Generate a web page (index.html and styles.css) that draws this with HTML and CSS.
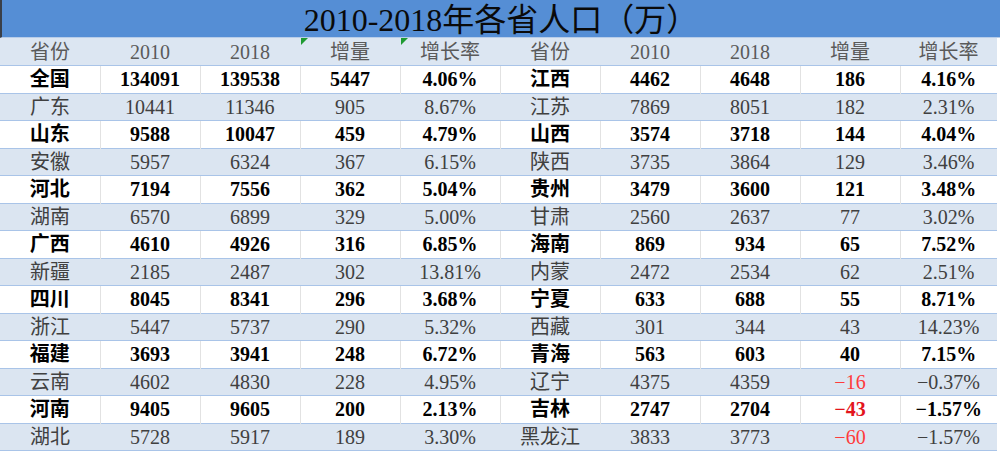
FILE: index.html
```html
<!DOCTYPE html>
<html lang="zh-CN">
<head>
<meta charset="utf-8">
<title>2010-2018年各省人口（万）</title>
<link rel="stylesheet" href="styles.css">
</head>
<body>
<div class="sheet">
  <div class="title">2010-2018年各省人口（万）</div>
  <table class="grid">
    <thead>
      <tr class="head">
        <th>省份</th><th>2010</th><th>2018</th><th class="flag">增量</th><th class="flag">增长率</th>
        <th>省份</th><th>2010</th><th>2018</th><th>增量</th><th>增长率</th>
      </tr>
    </thead>
    <tbody>
      <tr class="w"><td>全国</td><td>134091</td><td>139538</td><td>5447</td><td>4.06%</td><td>江西</td><td>4462</td><td>4648</td><td>186</td><td>4.16%</td></tr>
      <tr class="b"><td>广东</td><td>10441</td><td>11346</td><td>905</td><td>8.67%</td><td>江苏</td><td>7869</td><td>8051</td><td>182</td><td>2.31%</td></tr>
      <tr class="w"><td>山东</td><td>9588</td><td>10047</td><td>459</td><td>4.79%</td><td>山西</td><td>3574</td><td>3718</td><td>144</td><td>4.04%</td></tr>
      <tr class="b"><td>安徽</td><td>5957</td><td>6324</td><td>367</td><td>6.15%</td><td>陕西</td><td>3735</td><td>3864</td><td>129</td><td>3.46%</td></tr>
      <tr class="w"><td>河北</td><td>7194</td><td>7556</td><td>362</td><td>5.04%</td><td>贵州</td><td>3479</td><td>3600</td><td>121</td><td>3.48%</td></tr>
      <tr class="b"><td>湖南</td><td>6570</td><td>6899</td><td>329</td><td>5.00%</td><td>甘肃</td><td>2560</td><td>2637</td><td>77</td><td>3.02%</td></tr>
      <tr class="w"><td>广西</td><td>4610</td><td>4926</td><td>316</td><td>6.85%</td><td>海南</td><td>869</td><td>934</td><td>65</td><td>7.52%</td></tr>
      <tr class="b"><td>新疆</td><td>2185</td><td>2487</td><td>302</td><td>13.81%</td><td>内蒙</td><td>2472</td><td>2534</td><td>62</td><td>2.51%</td></tr>
      <tr class="w"><td>四川</td><td>8045</td><td>8341</td><td>296</td><td>3.68%</td><td>宁夏</td><td>633</td><td>688</td><td>55</td><td>8.71%</td></tr>
      <tr class="b"><td>浙江</td><td>5447</td><td>5737</td><td>290</td><td>5.32%</td><td>西藏</td><td>301</td><td>344</td><td>43</td><td>14.23%</td></tr>
      <tr class="w"><td>福建</td><td>3693</td><td>3941</td><td>248</td><td>6.72%</td><td>青海</td><td>563</td><td>603</td><td>40</td><td>7.15%</td></tr>
      <tr class="b"><td>云南</td><td>4602</td><td>4830</td><td>228</td><td>4.95%</td><td>辽宁</td><td>4375</td><td>4359</td><td class="neg">−16</td><td>−0.37%</td></tr>
      <tr class="w"><td>河南</td><td>9405</td><td>9605</td><td>200</td><td>2.13%</td><td>吉林</td><td>2747</td><td>2704</td><td class="neg">−43</td><td>−1.57%</td></tr>
      <tr class="b"><td>湖北</td><td>5728</td><td>5917</td><td>189</td><td>3.30%</td><td>黑龙江</td><td>3833</td><td>3773</td><td class="neg">−60</td><td>−1.57%</td></tr>
    </tbody>
  </table>
</div>
</body>
</html>
```

FILE: styles.css
```css
html, body {
  margin: 0;
  padding: 0;
  background: #ffffff;
}

.sheet {
  width: 1000px;
  height: 453px;
  overflow: hidden;
  font-family: "Liberation Serif", "Noto Sans CJK SC", serif;
}

.title {
  height: 38px;
  box-sizing: border-box;
  background: #558ed5;
  border-left: 2px solid #3a3f48;
  border-bottom: 1px solid #b8cde9;
  color: #0a0a0a;
  font-size: 32px;
  line-height: 40px;
  text-align: center;
}

.grid {
  width: 997px;
  border-collapse: collapse;
  table-layout: fixed;
}

.grid th,
.grid td {
  width: 100px;
  height: 27.5px;
  padding: 0;
  text-align: center;
  vertical-align: middle;
  font-size: 20px;
  line-height: 20px;
  box-sizing: border-box;
}

.grid th:last-child,
.grid td:last-child {
  width: 97px;
}

.head th {
  background: #dce6f2;
  color: #5a5a5a;
  font-weight: normal;
  border-bottom: 1px solid #a9c4e8;
  position: relative;
}

.head th.flag::before {
  content: "";
  position: absolute;
  left: 1px;
  top: 0;
  width: 0;
  height: 0;
  border-top: 7px solid #1e9a32;
  border-right: 7px solid transparent;
}

.w td {
  background: #ffffff;
  color: #000000;
  font-weight: bold;
  border-left: 1px solid #e2e2e2;
}

.w td:first-child {
  border-left: none;
}

.b td {
  background: #dbe5f1;
  color: #404040;
  font-weight: normal;
  border-top: 1px solid #a9c4e8;
  border-bottom: 1px solid #a9c4e8;
}

.w td.neg {
  color: #e3141c;
}

.b td.neg {
  color: #ff3b3b;
}
```
